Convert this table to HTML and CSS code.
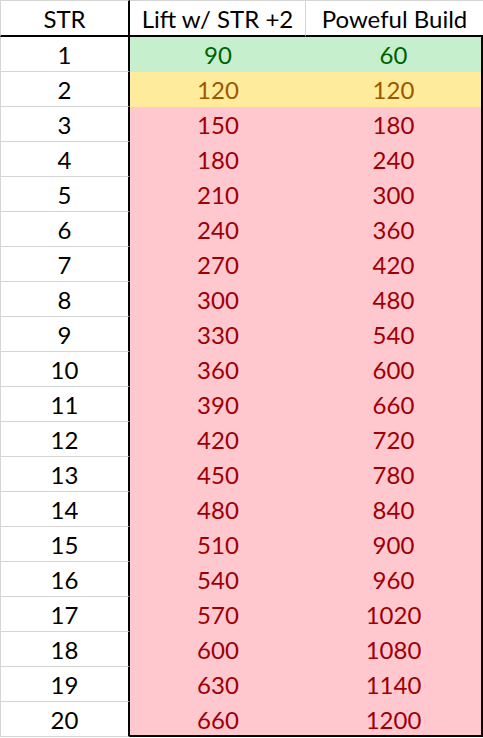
FILE: index.html
```html
<!DOCTYPE html>
<html>
<head>
<meta charset="utf-8">
<link rel="stylesheet" href="styles.css">
</head>
<body>
<div class="sheet">
  <div class="row head">
    <div class="cell a">STR</div>
    <div class="cell b">Lift w/ STR +2</div>
    <div class="cell c">Poweful Build</div>
  </div>
  <div class="row"><div class="cell a">1</div><div class="cell b good">90</div><div class="cell c good">60</div></div>
  <div class="row"><div class="cell a">2</div><div class="cell b neutral">120</div><div class="cell c neutral">120</div></div>
  <div class="row"><div class="cell a">3</div><div class="cell b bad">150</div><div class="cell c bad">180</div></div>
  <div class="row"><div class="cell a">4</div><div class="cell b bad">180</div><div class="cell c bad">240</div></div>
  <div class="row"><div class="cell a">5</div><div class="cell b bad">210</div><div class="cell c bad">300</div></div>
  <div class="row"><div class="cell a">6</div><div class="cell b bad">240</div><div class="cell c bad">360</div></div>
  <div class="row"><div class="cell a">7</div><div class="cell b bad">270</div><div class="cell c bad">420</div></div>
  <div class="row"><div class="cell a">8</div><div class="cell b bad">300</div><div class="cell c bad">480</div></div>
  <div class="row"><div class="cell a">9</div><div class="cell b bad">330</div><div class="cell c bad">540</div></div>
  <div class="row"><div class="cell a">10</div><div class="cell b bad">360</div><div class="cell c bad">600</div></div>
  <div class="row"><div class="cell a">11</div><div class="cell b bad">390</div><div class="cell c bad">660</div></div>
  <div class="row"><div class="cell a">12</div><div class="cell b bad">420</div><div class="cell c bad">720</div></div>
  <div class="row"><div class="cell a">13</div><div class="cell b bad">450</div><div class="cell c bad">780</div></div>
  <div class="row"><div class="cell a">14</div><div class="cell b bad">480</div><div class="cell c bad">840</div></div>
  <div class="row"><div class="cell a">15</div><div class="cell b bad">510</div><div class="cell c bad">900</div></div>
  <div class="row"><div class="cell a">16</div><div class="cell b bad">540</div><div class="cell c bad">960</div></div>
  <div class="row"><div class="cell a">17</div><div class="cell b bad">570</div><div class="cell c bad">1020</div></div>
  <div class="row"><div class="cell a">18</div><div class="cell b bad">600</div><div class="cell c bad">1080</div></div>
  <div class="row"><div class="cell a">19</div><div class="cell b bad">630</div><div class="cell c bad">1140</div></div>
  <div class="row last"><div class="cell a">20</div><div class="cell b bad">660</div><div class="cell c bad">1200</div></div>
</div>
</body>
</html>
```
FILE: styles.css
```css
html, body {
  margin: 0;
  padding: 0;
  background: #ffffff;
}

.sheet {
  width: 483px;
  font-family: Lato, "Open Sans", sans-serif;
  font-size: 24px;
  color: #000000;
}

.row {
  display: grid;
  grid-template-columns: 130px 176px 177px;
  height: 35px;
}

.row.head {
  height: 37px;
}

.cell {
  box-sizing: border-box;
  text-align: center;
  line-height: 30px;
  padding-top: 3px;
  white-space: nowrap;
  overflow: hidden;
}

.cell.a {
  border-left: 1px solid #d4d4d4;
  border-right: 2px solid #000000;
  border-bottom: 1px solid #d4d4d4;
}

.head .cell {
  border-top: 1px solid #d4d4d4;
  border-bottom: 2px solid #000000;
}

.head .cell.b {
  border-right: 1px solid #d4d4d4;
}

.row:not(.head) .cell.c {
  border-right: 2px solid #000000;
}

.last .cell.b,
.last .cell.c {
  border-bottom: 2px solid #000000;
}

.good {
  background: #c6efce;
  color: #006100;
}

.neutral {
  background: #ffeb9c;
  color: #9c5700;
}

.bad {
  background: #ffc7ce;
  color: #9c0006;
}
```
